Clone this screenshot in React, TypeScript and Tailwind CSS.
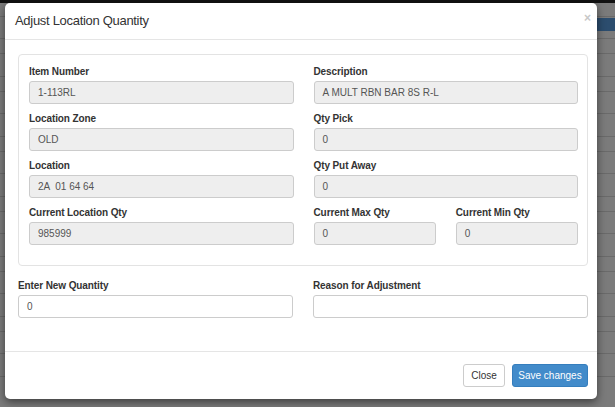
import React from 'react';

const readonly = [
  { left: { label: 'Item Number', value: '1-113RL' }, right: { label: 'Description', value: 'A MULT RBN BAR 8S R-L' } },
  { left: { label: 'Location Zone', value: 'OLD' }, right: { label: 'Qty Pick', value: '0' } },
  { left: { label: 'Location', value: '2A  01 64 64' }, right: { label: 'Qty Put Away', value: '0' } },
];

function Field({ label, value, plain }: { label: string; value: string; plain?: boolean }) {
  return (
    <div className="flex flex-col">
      <label className="text-[10px] font-bold text-[#333] leading-[12px] mb-[3px] tracking-[-0.1px]">{label}</label>
      <div
        className={`h-[23px] rounded-[3px] border border-[#ccc] px-[8px] flex items-center text-[10px] text-[#555] whitespace-pre ${
          plain ? 'bg-white' : 'bg-[#eee]'
        }`}
      >
        {value}
      </div>
    </div>
  );
}

export default function App() {
  return (
    <div className="relative w-[615px] h-[407px] overflow-hidden bg-[#7b7b7b] font-['Liberation_Sans',Arial,sans-serif]">
      {/* page behind the dimmed backdrop */}
      <div className="h-[3px] bg-[#121212]" />
      <div className="flex flex-col">
        {[14, 22, 15, 23, 15, 22, 23, 15, 22, 23, 15, 22, 23, 15, 22, 23, 15, 22, 23].map((h, i) => (
          <div key={i} style={{ height: h }} className="border-b border-[#6a6a6a]" />
        ))}
      </div>
      <div className="absolute right-0 top-[18px] w-[18px] h-[13px] bg-[#2c4d6e]" />

      {/* modal */}
      <div className="absolute left-[5px] top-[3px] w-[592px] h-[396px] bg-white rounded-[5px] shadow-[0_3px_9px_rgba(0,0,0,0.5)] flex flex-col">
        <div className="h-[37px] border-b border-[#e5e5e5] flex items-center justify-between pl-[10px] pr-[6px]">
          <h4 className="text-[13px] text-[#333] tracking-[-0.3px]">Adjust Location Quantity</h4>
          <span className="text-[12px] text-[#c8c8c8] font-bold leading-none mb-[6px]">×</span>
        </div>

        <div className="pl-[13px] pr-[9px] pt-[14px] flex-1">
          <div className="border border-[#e3e3e3] rounded-[4px] pl-[10px] pr-[9px] pt-[11px] pb-[20px] flex flex-col gap-[9px]">
            {readonly.map((row, i) => (
              <div key={i} className="grid grid-cols-2 gap-x-[20px]">
                <Field {...row.left} />
                <Field {...row.right} />
              </div>
            ))}
            <div className="grid grid-cols-2 gap-x-[20px]">
              <Field label="Current Location Qty" value="985999" />
              <div className="grid grid-cols-2 gap-x-[20px]">
                <Field label="Current Max Qty" value="0" />
                <Field label="Current Min Qty" value="0" />
              </div>
            </div>
          </div>

          <div className="grid grid-cols-2 gap-x-[20px] mt-[14px]">
            <Field label="Enter New Quantity" value="0" plain />
            <Field label="Reason for Adjustment" value="" plain />
          </div>
        </div>

        <div className="h-[48px] border-t border-[#e5e5e5] flex items-center justify-end gap-[7px] pr-[9px]">
          <button className="h-[23px] w-[42px] rounded-[3px] border border-[#ccc] bg-white text-[10px] text-[#333]">
            Close
          </button>
          <button className="h-[23px] w-[76px] rounded-[3px] border border-[#357ebd] bg-[#428bca] text-[10px] text-white">
            Save changes
          </button>
        </div>
      </div>
    </div>
  );
}
